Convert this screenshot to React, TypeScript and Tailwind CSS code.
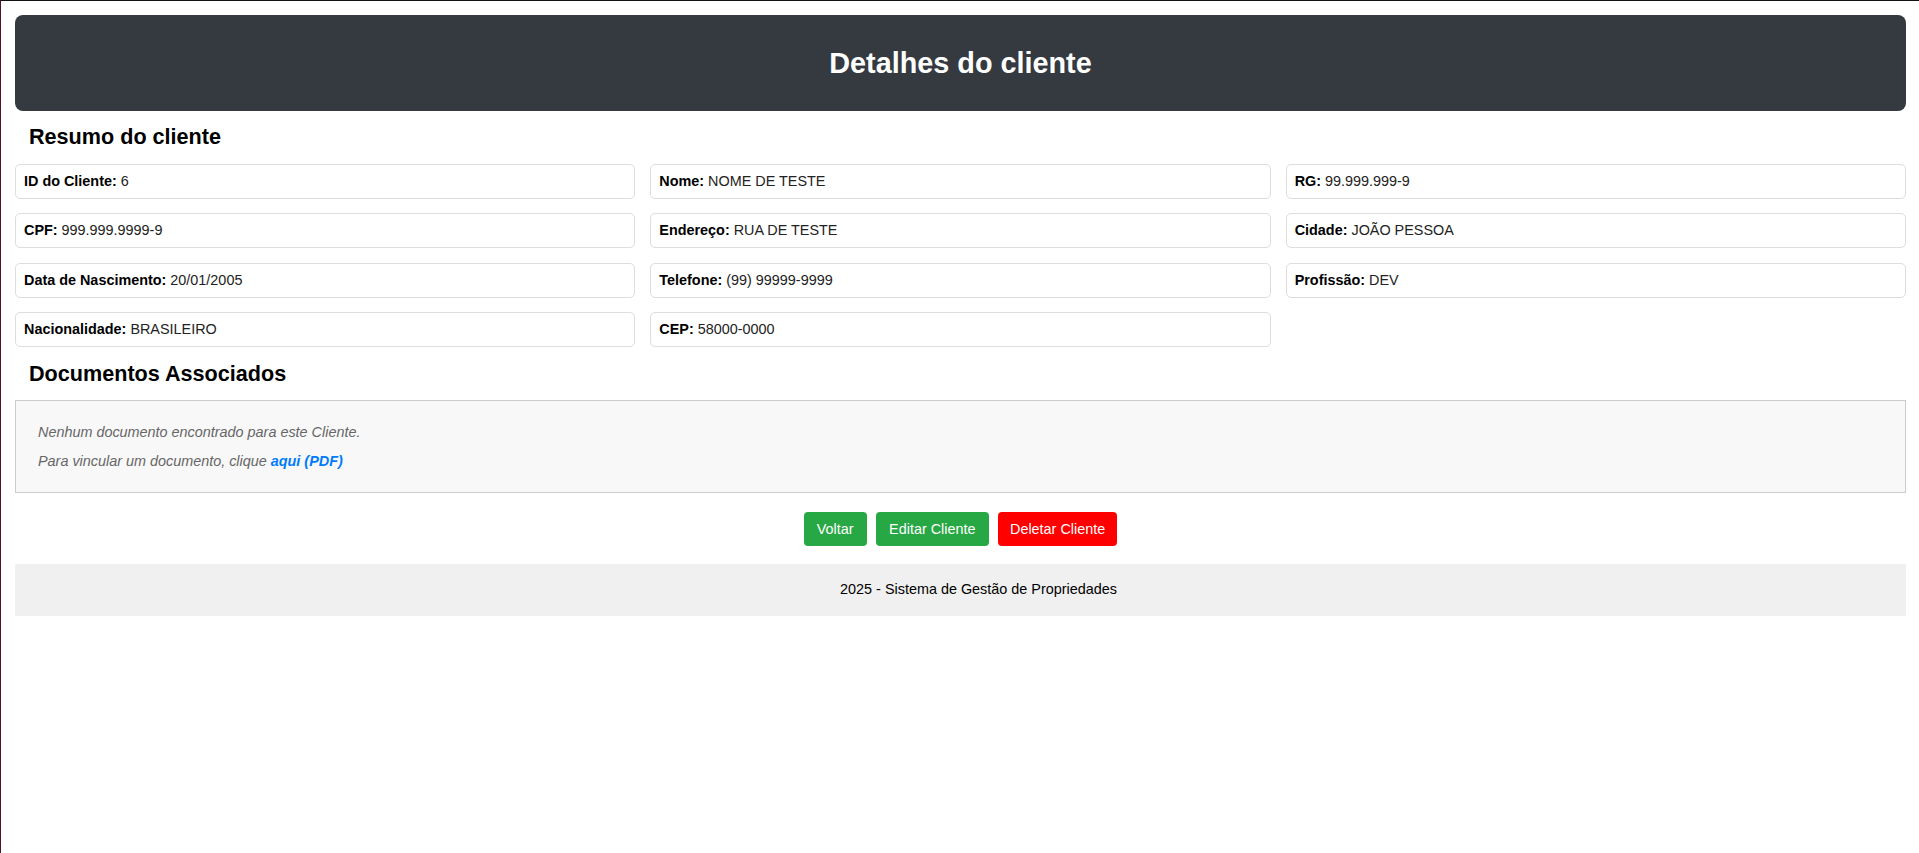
import React from 'react';

type Campo = { label: string; valor: string };

// dados do cliente exibidos no resumo
const campos: Campo[] = [
  { label: 'ID do Cliente', valor: '6' },
  { label: 'Nome', valor: 'NOME DE TESTE' },
  { label: 'RG', valor: '99.999.999-9' },
  { label: 'CPF', valor: '999.999.9999-9' },
  { label: 'Endereço', valor: 'RUA DE TESTE' },
  { label: 'Cidade', valor: 'JOÃO PESSOA' },
  { label: 'Data de Nascimento', valor: '20/01/2005' },
  { label: 'Telefone', valor: '(99) 99999-9999' },
  { label: 'Profissão', valor: 'DEV' },
  { label: 'Nacionalidade', valor: 'BRASILEIRO' },
  { label: 'CEP', valor: '58000-0000' },
];

function App() {
  return (
    <div
      className="min-h-screen bg-white border-t border-l border-t-[#121212] border-l-[#5a0f28] pt-[14px] pl-[14px] pr-[13px] text-[14.4px] text-black"
      style={{ fontFamily: '"Liberation Sans", Arial, sans-serif' }}
    >
      {/* Cabeçalho */}
      <header className="h-[96px] bg-[#343a40] rounded-[8px] flex items-center justify-center">
        <h1 className="text-[28.8px] font-bold text-white leading-none">Detalhes do cliente</h1>
      </header>

      {/* Resumo */}
      <h2 className="text-[21.6px] font-bold leading-[24.8px] mt-[14px] mb-[14px] ml-[14px]">
        Resumo do cliente
      </h2>
      <div className="grid grid-cols-3 gap-x-[15px] gap-y-[14.4px]">
        {campos.map((c) => (
          <div
            key={c.label}
            className="h-[35px] flex items-center px-[8px] border border-[#dddddd] rounded-[5px] bg-white leading-[16.5px]"
          >
            <span>
              <strong className="font-bold text-black">{c.label}:</strong>{' '}
              <span className="text-[#222]">{c.valor}</span>
            </span>
          </div>
        ))}
      </div>

      {/* Documentos */}
      <h2 className="text-[21.6px] font-bold leading-[24.8px] mt-[15px] mb-[13.5px] ml-[14px]">
        Documentos Associados
      </h2>
      <div className="h-[93px] border border-[#cccccc] bg-[#f8f8f8] pt-[23px] px-[22px] italic text-[#666] leading-[16.5px] flex flex-col gap-[12.5px]">
        <p>Nenhum documento encontrado para este Cliente.</p>
        <p>
          Para vincular um documento, clique{' '}
          <a href="#" className="font-bold text-[#007bff]">
            aqui (PDF)
          </a>
        </p>
      </div>

      {/* Ações */}
      <div className="flex justify-center gap-[9.5px] mt-[18.5px] mb-[18.5px]">
        <button className="h-[34px] px-[13px] rounded-[4px] bg-[#28a745] text-white leading-none">Voltar</button>
        <button className="h-[34px] px-[13px] rounded-[4px] bg-[#28a745] text-white leading-none">Editar Cliente</button>
        <button className="h-[34px] px-[12px] rounded-[4px] bg-[#ff0000] text-white leading-none">Deletar Cliente</button>
      </div>

      {/* Rodapé */}
      <footer className="h-[52px] bg-[#f0f0f0] flex items-center justify-center pl-[36px] text-black">
        2025 - Sistema de Gestão de Propriedades
      </footer>
    </div>
  );
}

export default App;
